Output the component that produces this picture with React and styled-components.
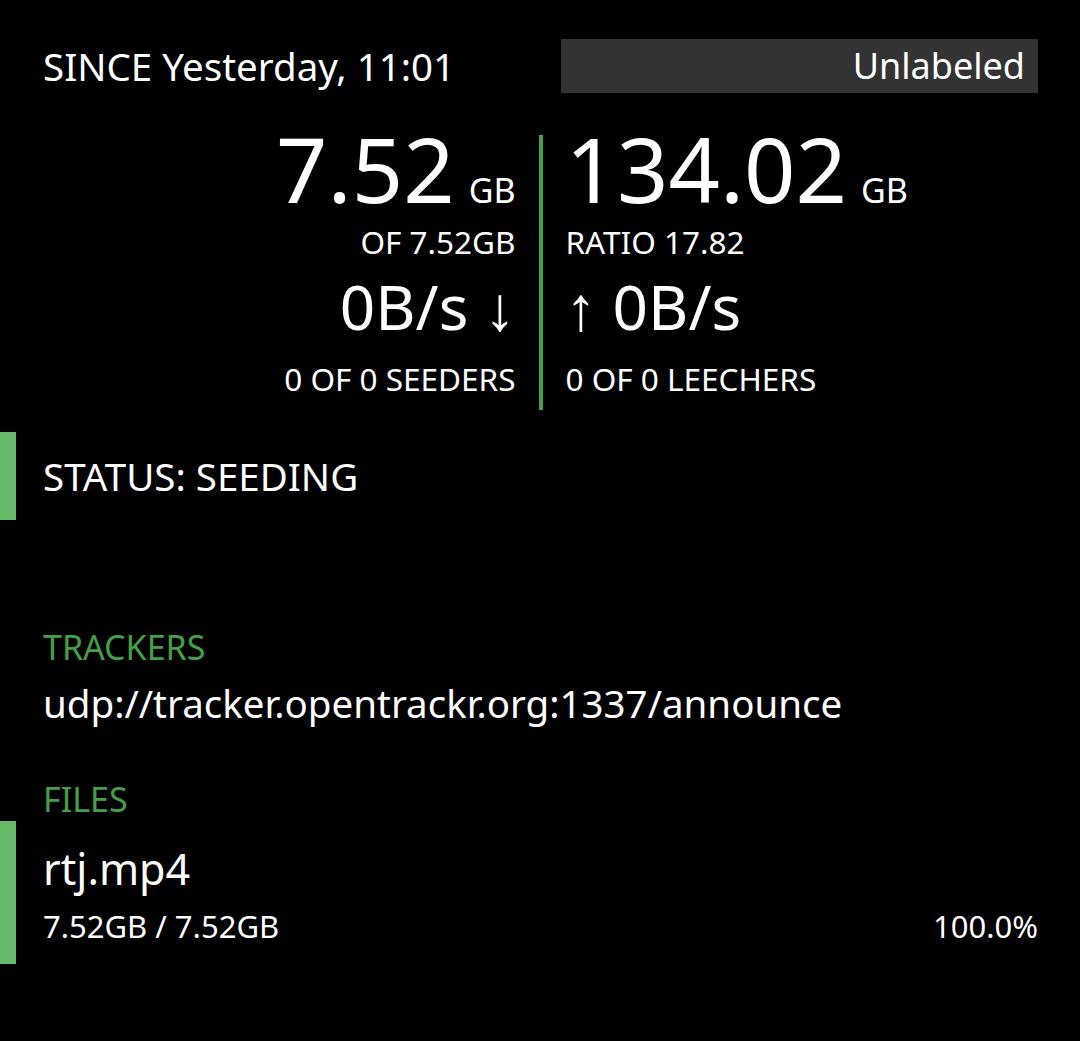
import React from "react";
import styled, { createGlobalStyle } from "styled-components";

const GlobalStyle = createGlobalStyle`
  html, body {
    margin: 0;
    padding: 0;
    background: #000;
  }
  body {
    font-family: "Noto Sans", "Open Sans", sans-serif;
    color: #fff;
  }
`;

const Page = styled.main`
  padding: 39px 42px 40px 0;
`;

const Header = styled.header`
  display: grid;
  grid-template-columns: 1fr 477px;
  align-items: center;
  padding-left: 43px;
`;

const Since = styled.div`
  font-size: 38.5px;
  line-height: 54px;
  white-space: nowrap;
`;

const Label = styled.div`
  background: #333;
  height: 54px;
  line-height: 54px;
  text-align: right;
  padding-right: 13px;
  font-size: 36px;
`;

const Stats = styled.section`
  display: grid;
  grid-template-columns: 1fr 4px 1fr;
  column-gap: 23px;
  margin-top: 42px;
  padding-left: 43px;
`;

const Divider = styled.div`
  background: #43a047;
`;

const Column = styled.div`
  display: flex;
  flex-direction: column;
  align-items: ${(p) => (p.$right ? "flex-end" : "flex-start")};
  padding-bottom: 9px;
  white-space: nowrap;
`;

const Big = styled.div`
  font-size: 90px;
  line-height: 66px;
`;

const Unit = styled.span`
  font-size: 34px;
  line-height: 0;
  margin-left: 14px;
`;

const Small = styled.div`
  font-size: 31.5px;
  line-height: 44px;
  margin-top: ${(p) => p.$mt}px;
`;

const Speed = styled.div`
  font-size: 62px;
  line-height: 76px;
  margin-top: 4px;
`;

const Row = styled.div`
  display: flex;
  align-items: center;
  min-height: ${(p) => p.$h}px;
  margin-top: ${(p) => p.$mt || 0}px;
  border-left: 16px solid #66bb6a;
  padding-left: 27px;
  box-sizing: border-box;
`;

const StatusText = styled.div`
  font-size: 38.5px;
`;

const Section = styled.section`
  padding-left: 43px;
  margin-top: ${(p) => p.$mt}px;
`;

const SectionTitle = styled.div`
  color: #43a047;
  font-size: 34px;
  line-height: 44px;
`;

const Tracker = styled.div`
  font-size: 38.5px;
  line-height: 69px;
  white-space: nowrap;
`;

const File = styled.div`
  flex: 1;
  display: flex;
  flex-direction: column;
  padding: 20px 0 16px;
`;

const FileName = styled.div`
  font-size: 43px;
  line-height: 56px;
`;

const FileMeta = styled.div`
  display: flex;
  justify-content: space-between;
  font-size: 31px;
  line-height: 44px;
  margin-top: 7px;
`;

export default function App() {
  return (
    <>
      <GlobalStyle />
      <Page>
        <Header>
          <Since>SINCE Yesterday, 11:01</Since>
          <Label>Unlabeled</Label>
        </Header>

        <Stats>
          <Column $right>
            <Big>
              7.52<Unit>GB</Unit>
            </Big>
            <Small $mt={19}>OF 7.52GB</Small>
            <Speed>0B/s ↓</Speed>
            <Small $mt={13}>0 OF 0 SEEDERS</Small>
          </Column>
          <Divider />
          <Column>
            <Big>
              134.02<Unit>GB</Unit>
            </Big>
            <Small $mt={19}>RATIO 17.82</Small>
            <Speed>↑ 0B/s</Speed>
            <Small $mt={13}>0 OF 0 LEECHERS</Small>
          </Column>
        </Stats>

        <Row $h={88} $mt={22}>
          <StatusText>STATUS: SEEDING</StatusText>
        </Row>

        <Section $mt={105}>
          <SectionTitle>TRACKERS</SectionTitle>
          <Tracker>udp://tracker.opentrackr.org:1337/announce</Tracker>
        </Section>

        <Section $mt={39}>
          <SectionTitle>FILES</SectionTitle>
        </Section>
        <Row $h={143}>
          <File>
            <FileName>rtj.mp4</FileName>
            <FileMeta>
              <span>7.52GB / 7.52GB</span>
              <span>100.0%</span>
            </FileMeta>
          </File>
        </Row>
      </Page>
    </>
  );
}
